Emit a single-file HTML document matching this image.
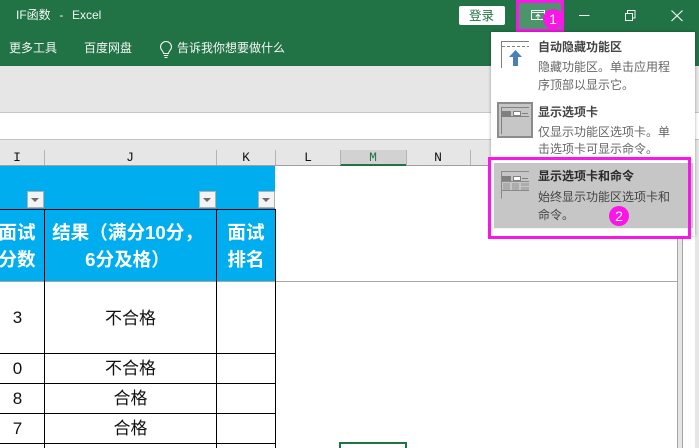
<!DOCTYPE html>
<html lang="zh"><head><meta charset="utf-8"><title>IF函数 - Excel</title>
<style>
html,body{margin:0;padding:0;width:699px;height:448px;overflow:hidden;background:#fff}
body{position:relative;font-family:"Liberation Sans","Noto Sans CJK SC",sans-serif}
.r{position:absolute}
.t{position:absolute;white-space:nowrap;line-height:20px;font-size:12px}
.w{color:#f2f7f4}
.c{position:absolute;font-family:"Liberation Mono",monospace;font-size:13px;line-height:14px;width:20px;text-align:center;top:151px;color:#111}
.h{position:absolute;color:#fff;font-weight:bold;font-size:18.6px;line-height:27px;text-align:center;white-space:nowrap}
.d{position:absolute;color:#111;font-size:17px;line-height:24px;text-align:center;white-space:nowrap}
.k{background:#000}
.s{position:absolute;top:150px;width:1px;height:15px;background:#b4b4b4}
.f{position:absolute;top:191px;width:15px;height:15px;background:#f3f3f3;border:1px solid #b0b0b0}
.f:after{content:"";position:absolute;left:3px;top:6px;border-left:4px solid transparent;border-right:4px solid transparent;border-top:4px solid #6a6a70}
.m{color:#444;font-weight:bold}
.b{color:#666}
.n{position:absolute;width:20px;height:20px;border-radius:50%;background:#f916e6;color:#fff;font-size:14px;line-height:20px;text-align:center}
</style></head><body>
<div class="r" style="left:0;top:0;width:699px;height:66px;background:#217346"></div>
<div class="r" style="left:0;top:66px;width:699px;height:100px;background:#e6e6e6"></div>
<div class="r" style="left:0;top:112px;width:699px;height:1px;background:#c6c6c6"></div>
<div class="r" style="left:0;top:113px;width:699px;height:26px;background:#fff"></div>
<div class="r" style="left:0;top:139px;width:699px;height:1px;background:#c6c6c6"></div>
<div class="r" style="left:0;top:165px;width:699px;height:1px;background:#a0a0a0"></div>

<div class="t w" style="left:16px;top:5px;word-spacing:1px">IF函数 &nbsp;-&nbsp; Excel</div>
<div class="t w" style="left:9px;top:38px">更多工具</div>
<div class="t w" style="left:84px;top:38px">百度网盘</div>
<svg class="r" style="left:159px;top:41px" width="14" height="18" viewBox="0 0 14 18" fill="none" stroke="#f2f7f4" stroke-width="1.1"><path d="M4.500 12.500C4.500 10 1.500 9 1.500 6a5.500 5.500 0 0 1 11 0c0 3-3 4-3 6.500z"/><path d="M4.800 14.500h4.400M5.500 16.500h3"/></svg>
<div class="t w" style="left:177px;top:38px">告诉我你想要做什么</div>

<div class="r" style="left:459px;top:6px;width:46px;height:19px;background:#fff;border-radius:2px"></div>
<div class="t" style="left:469px;top:6px;color:#217346;font-size:12.500px">登录</div>

<div class="r" style="left:516px;top:0;width:42px;height:26px;background:#4a9569;border:3px solid #f916e6"></div>
<svg class="r" style="left:530px;top:9px" width="16" height="12" viewBox="0 0 16 12" fill="none" stroke="#fff"><path d="M1.500 1.500h13v9h-13zM1.500 3.500h13"/><path d="M8 10V5.500M5.800 7.500 8 5.300l2.200 2.200"/></svg>
<div class="n" style="left:543px;top:9px">1</div>
<svg class="r" style="left:575px;top:6px" width="112" height="18" viewBox="0 0 112 18" fill="none" stroke="#f2f7f4" stroke-width="1"><path d="M4 9.500h10.500"/><path d="M50.500 7.500h7v7h-7zM52.500 7V4.500h7.500v7.500h-2.500"/><path d="M96.500 4.500 107.500 15M107.500 4.500 96.500 15" stroke-width="1.200"/></svg>

<!-- column headers -->
<div class="r" style="left:340px;top:150px;width:66px;height:14px;background:#d2d2d2"></div>
<div class="r" style="left:340px;top:164px;width:66px;height:2px;background:#217346"></div>
<div class="s" style="left:44px"></div><div class="s" style="left:216px"></div><div class="s" style="left:275px"></div><div class="s" style="left:340px"></div><div class="s" style="left:406px"></div><div class="s" style="left:470px"></div>
<div class="c" style="left:7px">I</div>
<div class="c" style="left:120px">J</div>
<div class="c" style="left:236px">K</div>
<div class="c" style="left:298px">L</div>
<div class="c" style="left:363px;color:#217346">M</div>
<div class="c" style="left:428px">N</div>

<!-- table header -->
<div class="r" style="left:0;top:166px;width:275px;height:115px;background:#00aeef"></div>
<div class="r k" style="left:0;top:209px;width:276px;height:1px"></div>
<div class="f" style="left:27px"></div><div class="f" style="left:199px"></div><div class="f" style="left:258px"></div>
<div class="h" style="left:-10px;top:219px;width:54px">面试<br>分数</div>
<div class="h" style="left:42px;top:219px;width:171px">结果（满分10分，<br>6分及格）</div>
<div class="h" style="left:217px;top:219px;width:58px">面试<br>排名</div>

<!-- grid -->
<div class="r" style="left:0;top:281px;width:677px;height:1px;background:#a6a6a6"></div>
<div class="r k" style="left:44px;top:209px;width:1px;height:239px"></div>
<div class="r k" style="left:216px;top:209px;width:1px;height:239px"></div>
<div class="r k" style="left:275px;top:209px;width:1px;height:239px"></div>
<div class="r k" style="left:0;top:353px;width:276px;height:1px"></div>
<div class="r k" style="left:0;top:383px;width:276px;height:1px"></div>
<div class="r k" style="left:0;top:413px;width:276px;height:1px"></div>
<div class="r k" style="left:0;top:443px;width:276px;height:1px"></div>
<div class="d" style="left:0;top:306px;width:35px">3</div>
<div class="d" style="left:45px;top:307px;width:171px">不合格</div>
<div class="d" style="left:0;top:357px;width:35px">0</div>
<div class="d" style="left:45px;top:357px;width:171px">不合格</div>
<div class="d" style="left:0;top:387px;width:35px">8</div>
<div class="d" style="left:45px;top:387px;width:171px">合格</div>
<div class="d" style="left:0;top:417px;width:35px">7</div>
<div class="d" style="left:45px;top:417px;width:171px">合格</div>

<div class="r" style="left:339px;top:442px;width:64px;height:6px;border:2px solid #217346;border-bottom:0"></div>

<!-- right side -->
<div class="r" style="left:677px;top:235px;width:4px;height:213px;background:#e6e6e6;border-left:1px solid #a6a6a6;border-right:1px solid #a6a6a6"></div>
<div class="r" style="left:695px;top:140px;width:4px;height:308px;background:#e6e6e6"></div>

<!-- menu -->
<div class="r" style="left:491px;top:32px;width:204px;height:204px;background:#fff;box-shadow:0 0 3px rgba(0,0,0,.35)"></div>
<svg class="r" style="left:491px;top:32px" width="50" height="170" viewBox="491 32 50 170" fill="none">
<path d="M501.500 68V41.500H529" stroke="#808080"/><path d="M502 46.500h27" stroke="#808080" stroke-dasharray="3 2"/>
<path d="M515.500 50l6.500 7h-4v9h-5v-9h-4z" fill="#4a80b8"/>
<rect x="498" y="103" width="34" height="34" fill="#c6c6c6" stroke="#8c8c8c" stroke-width="2"/>
<path d="M501.500 134v-26.500H529M501.500 116.500H529" stroke="#808080"/>
<rect x="502" y="111" width="9" height="5" fill="#808080"/><rect x="513.500" y="111.500" width="7" height="4" fill="#fff" stroke="#808080"/><path d="M522 113.500h6" stroke="#808080"/>
</svg>
<div class="t m" style="left:538px;top:37px">自动隐藏功能区</div>
<div class="t b" style="left:538px;top:57px">隐藏功能区。单击应用程</div>
<div class="t b" style="left:538px;top:75px">序顶部以显示它。</div>
<div class="t m" style="left:538px;top:102px">显示选项卡</div>
<div class="t b" style="left:538px;top:122px">仅显示功能区选项卡。单</div>
<div class="t b" style="left:538px;top:139px">击选项卡可显示命令。</div>

<div class="r" style="left:493px;top:163px;width:199px;height:65px;background:#c6c6c6;border:1px solid #f4f4f4;border-top:0"></div>
<svg class="r" style="left:495px;top:165px" width="40" height="40" viewBox="495 165 40 40" fill="none">
<path d="M501.500 198.500v-27H529M501.500 181.500H529M502 190.500H529" stroke="#8a8a8a"/>
<rect x="502" y="176" width="9" height="5" fill="#808080"/><rect x="513.500" y="176.500" width="7" height="4" fill="#fff" stroke="#808080"/><path d="M522 178.500h6" stroke="#808080"/>
<path d="M503 183h7v7h-7zM512 183h7v7h-7zM521 183h8v3h-8zM521 187h8v3h-8z" fill="#acacac"/>
</svg>
<div class="t" style="left:538px;top:166px;color:#2a2a2a;font-weight:bold">显示选项卡和命令</div>
<div class="t" style="left:538px;top:187px;color:#444">始终显示功能区选项卡和</div>
<div class="t" style="left:538px;top:205px;color:#444">命令。</div>
<div class="r" style="left:488px;top:157px;width:197px;height:76px;border:3px solid #f916e6"></div>
<div class="n" style="left:609px;top:206px">2</div>
</body></html>
